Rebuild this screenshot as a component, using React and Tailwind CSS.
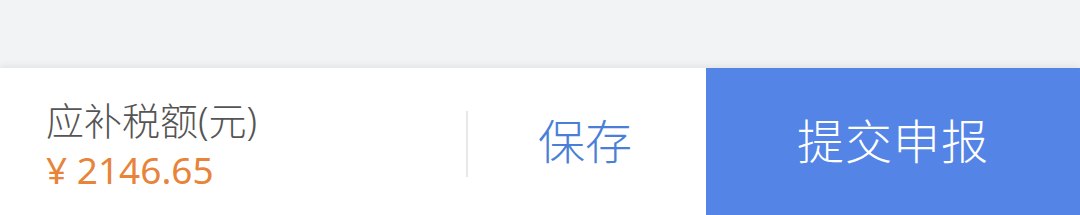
import React from 'react';

export default function App() {
  return (
    <div
      className="w-[1080px] h-[215px] flex flex-col bg-[#f2f3f5] overflow-hidden"
      style={{ fontFamily: '"Noto Sans", "Noto Sans CJK SC", sans-serif' }}
    >
      {/* Page background */}
      <div className="h-[68px] shrink-0" />

      {/* Bottom action bar */}
      <div className="flex flex-1 bg-white shadow-[0_-3px_6px_rgba(0,0,0,0.06)]">
        <div className="w-[466px] flex flex-col justify-center pl-[46px] pt-[6px]">
          <div className="text-[38px] leading-[50px] font-light text-[#555555]">应补税额(元)</div>
          <div className="text-[37px] leading-[50px] text-[#e8843a]">¥ 2146.65</div>
        </div>

        <div className="flex items-center pt-[4px]">
          <div className="w-[2px] h-[66px] bg-[#e8e8e8]" />
        </div>

        <button className="flex-1 flex items-center justify-center text-[47px] font-light text-[#4a7fd8] pr-[4px]">
          保存
        </button>

        <button className="w-[374px] flex items-center justify-center bg-[#5384e6] text-[47px] font-light text-white tracking-[1px]">
          提交申报
        </button>
      </div>
    </div>
  );
}
